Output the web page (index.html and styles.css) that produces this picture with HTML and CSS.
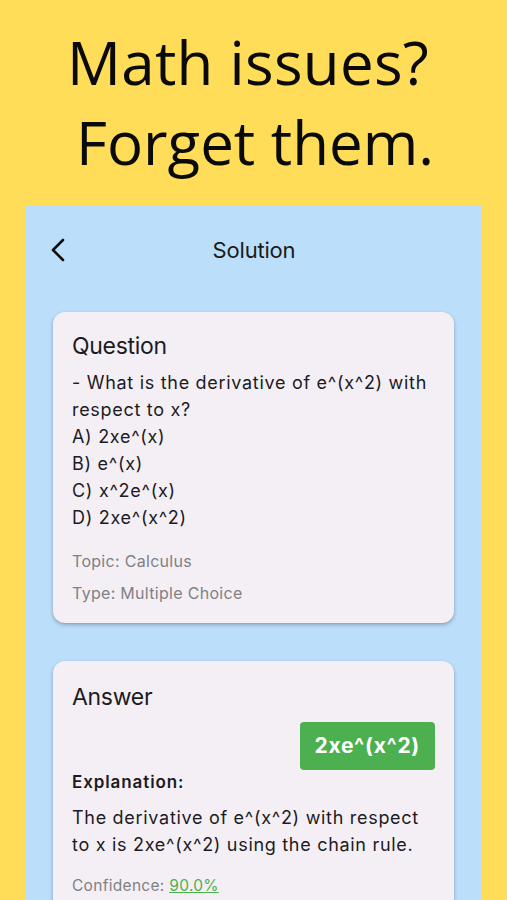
FILE: index.html
```html
<!DOCTYPE html>
<html>
<head>
<meta charset="utf-8">
<link rel="stylesheet" href="styles.css">
</head>
<body>
<div class="page">
  <div class="headline">
    <div class="line1">Math issues?</div>
    <div class="line2">Forget them.</div>
  </div>
  <div class="phone">
    <div class="appbar">
      <svg class="back" width="16" height="24" viewBox="0 0 16 24"><path d="M13 2 L3 12 L13 22" fill="none" stroke="#111" stroke-width="2.6" stroke-linecap="round" stroke-linejoin="round"/></svg>
      <div class="title">Solution</div>
    </div>
    <div class="card q">
      <div class="card-title">Question</div>
      <div class="body">- What is the derivative of e^(x^2) with respect to x?<br>A) 2xe^(x)<br>B) e^(x)<br>C) x^2e^(x)<br>D) 2xe^(x^2)</div>
      <div class="meta first">Topic: Calculus</div>
      <div class="meta">Type: Multiple Choice</div>
    </div>
    <div class="card a">
      <div class="card-title">Answer</div>
      <div class="answer-row"><div class="answer">2xe^(x^2)</div></div>
      <div class="expl-label">Explanation:</div>
      <div class="body expl">The derivative of e^(x^2) with respect to x is 2xe^(x^2) using the chain rule.</div>
      <div class="meta conf">Confidence: <span class="pct">90.0%</span></div>
    </div>
  </div>
</div>
</body>
</html>
```
FILE: styles.css
```css
html, body {
  margin: 0;
  padding: 0;
  background: #FFDD59;
  overflow: hidden;
}
.page {
  width: 507px;
  height: 900px;
  overflow: hidden;
}
.headline {
  height: 205px;
  font-family: "Open Sans", sans-serif;
  font-size: 60px;
  color: #0a0a0a;
  box-sizing: border-box;
  padding-top: 22px;
  line-height: 80px;
}
.line1 {
  padding-left: 67px;
  letter-spacing: 0.3px;
}
.line2 {
  padding-left: 76px;
  letter-spacing: 0;
}
.phone {
  margin: 0 26px;
  width: 455px;
  height: 695px;
  background: #BBDEFB;
  box-sizing: border-box;
  padding: 17px 27px 0;
  font-family: Inter, sans-serif;
}
.appbar {
  height: 56px;
  display: flex;
  align-items: center;
  justify-content: center;
  position: relative;
}
.back {
  position: absolute;
  left: -3px;
  top: 16px;
}
.title {
  font-size: 22px;
  color: #1a1a1a;
  margin-left: 1px;
  letter-spacing: -0.2px;
}
.card {
  background: #F4EFF5;
  border-radius: 12px;
  box-shadow: 0 2px 4px rgba(0,0,0,0.22), 0 1px 2px rgba(0,0,0,0.1);
  padding: 20px 19px 20px;
}
.card.q {
  margin-top: 34px;
}
.card.a {
  margin-top: 38px;
  padding-top: 22px;
}
.card-title {
  font-size: 23px;
  line-height: 28px;
  color: #1c1b1f;
  letter-spacing: -0.3px;
}
.body {
  font-size: 18px;
  letter-spacing: 0.7px;
  line-height: 27px;
  color: #1c1b1f;
  margin-top: 9px;
}
.meta {
  font-size: 16px;
  line-height: 20px;
  letter-spacing: 0.3px;
  color: #808085;
  margin-top: 12px;
}
.meta.first {
  margin-top: 20px;
}
.answer-row {
  display: flex;
  justify-content: flex-end;
  margin-top: 11px;
}
.answer {
  background: #4CAF50;
  color: #fff;
  font-weight: 700;
  font-size: 21px;
  letter-spacing: 0.7px;
  height: 48px;
  line-height: 48px;
  padding: 0 15px;
  border-radius: 4px;
}
.expl-label {
  font-size: 17px;
  font-weight: 600;
  letter-spacing: 0.9px;
  line-height: 24px;
  color: #1c1b1f;
}
.body.expl {
  margin-top: 10px;
}
.meta.conf {
  margin-top: 18px;
  font-size: 15.5px;
}
.pct {
  color: #4CAF50;
  text-decoration: underline;
}
```
